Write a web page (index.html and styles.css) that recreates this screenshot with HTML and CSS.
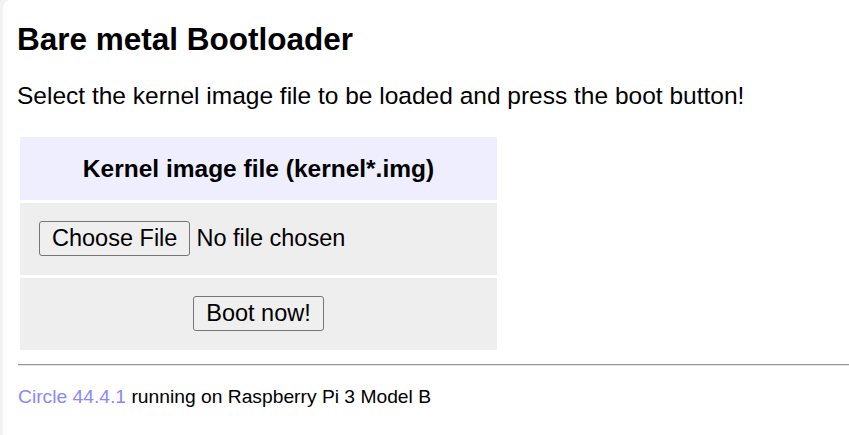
FILE: index.html
```html
<!DOCTYPE html>
<html lang="en">
<head>
<meta charset="utf-8">
<title>Bare metal Bootloader</title>
<link rel="stylesheet" href="styles.css">
</head>
<body>
<div class="page">
  <h2 class="title">Bare metal Bootloader</h2>
  <p class="intro">Select the kernel image file to be loaded and press the boot button!</p>
  <table class="boot-table">
    <tr><th class="head-cell">Kernel image file (kernel*.img)</th></tr>
    <tr><td class="row-cell"><span class="file-input"><button class="btn" type="button">Choose File</button><span class="file-name">No file chosen</span></span></td></tr>
    <tr><td class="row-cell center"><button class="btn btn-boot" type="button">Boot now!</button></td></tr>
  </table>
  <hr class="rule">
  <p class="footer"><a class="link" href="#">Circle 44.4.1</a> running on Raspberry Pi 3 Model B</p>
</div>
</body>
</html>
```
FILE: styles.css
```css
html, body {
  margin: 0;
  padding: 0;
}
body {
  background: #f2f2f2;
  font-family: "Liberation Sans", Arial, sans-serif;
  color: #000;
}
.page {
  margin-left: 3px;
  background: #fff;
  min-height: 435px;
  border-top-left-radius: 8px;
  padding: 21px 0 0 14px;
  box-sizing: border-box;
}
.title {
  margin: 0;
  font-size: 31.5px;
  font-weight: bold;
  line-height: 36px;
}
.intro {
  margin: 25px 0 0 0;
  font-size: 24.5px;
  line-height: 28px;
}
.boot-table {
  margin-top: 24px;
  border-spacing: 3px;
  width: 483px;
  font-size: 24px;
}
.head-cell {
  background: #eeeeff;
  padding: 17.5px 10px;
  line-height: 28px;
  font-size: 24.5px;
  font-weight: bold;
  text-align: center;
}
.row-cell {
  background: #eeeeee;
  padding: 18px 19px 19px 19px;
  line-height: 27px;
}
.center {
  text-align: center;
}
.file-input {
  display: flex;
  align-items: center;
  gap: 6px;
  font-size: 23.5px;
}
.btn {
  display: block;
  font-family: "Liberation Sans", Arial, sans-serif;
  font-size: 23.5px;
  line-height: 27px;
  color: #000;
  background: #efefef;
  border: 1px solid #767676;
  border-radius: 3px;
  padding: 3px 12px;
  height: 35px;
  box-sizing: border-box;
}
.btn-boot {
  display: inline-block;
  vertical-align: top;
  padding: 3px 12.5px;
}
.rule {
  margin: 11px 0 0 1px;
  border: none;
  border-top: 1px solid #9a9a9a;
  border-bottom: 1px solid #e4e4e4;
  height: 0;
}
.footer {
  margin: 20px 0 0 1px;
  font-size: 19.25px;
  line-height: 22px;
}
.link {
  color: #8888ff;
  text-decoration: none;
}
```
